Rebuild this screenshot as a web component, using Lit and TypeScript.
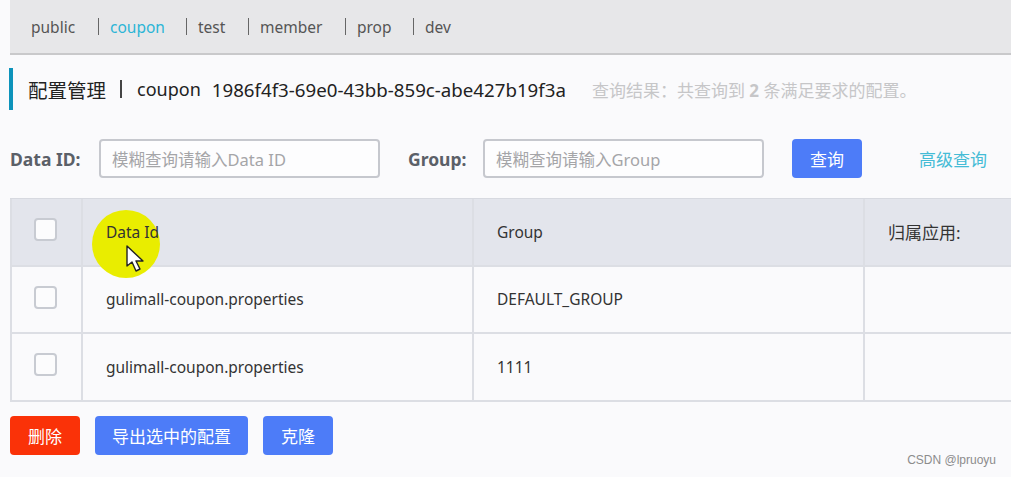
import { LitElement, html, css } from 'lit';
import { customElement } from 'lit/decorators.js';

const TABS = ['public', 'coupon', 'test', 'member', 'prop', 'dev'];
const ROWS = [
  ['gulimall-coupon.properties', 'DEFAULT_GROUP'],
  ['gulimall-coupon.properties', '1111'],
];

@customElement('app-root')
export class AppRoot extends LitElement {
  static styles = css`
    :host {
      display: block;
      position: relative;
      width: 1011px;
      height: 477px;
      overflow: hidden;
      box-sizing: border-box;
      padding-left: 10px;
      background: #fafafc;
      color: #333;
      font-family: 'Noto Sans', 'Noto Sans CJK SC', sans-serif;
    }

    .tabs {
      display: flex;
      align-items: center;
      height: 53px;
      padding: 0 0 0 21px;
      background: #e7e7e9;
      border-bottom: 2px solid #c9c9cb;
      font-size: 15.5px;
      color: #555;
      box-sizing: content-box;
    }
    .tab {
      display: flex;
      align-items: center;
    }
    .tab + .tab::before {
      content: '';
      width: 1px;
      height: 17px;
      margin-right: 11px;
      background: #666;
    }
    .tab.active {
      color: #2cb5d6;
    }
    .tab:nth-child(1) { width: 67px; }
    .tab:nth-child(2) { width: 88px; }
    .tab:nth-child(3) { width: 62px; }
    .tab:nth-child(4) { width: 97px; }
    .tab:nth-child(5) { width: 68px; }

    .title {
      display: flex;
      align-items: center;
      height: 42px;
      margin-top: 13px;
      border-left: 4px solid #0d93bb;
      margin-left: -1px;
      padding-left: 15px;
      font-size: 18px;
      color: #222;
      white-space: nowrap;
    }
    .title-main {
      font-size: 19.5px;
    }
    .sep {
      width: 2px;
      height: 18px;
      margin: 0 15px 0 14px;
      background: #444;
    }
    .ns-id {
      margin-left: 11px;
      font-size: 18.7px;
    }
    .result {
      margin-left: 26px;
      font-size: 17px;
      color: #c6c6c8;
    }

    .search {
      display: flex;
      align-items: center;
      height: 39px;
      margin-top: 29px;
      white-space: nowrap;
    }
    label {
      font-size: 17.5px;
      font-weight: 700;
      color: #5b6068;
    }
    .input {
      display: flex;
      align-items: center;
      box-sizing: border-box;
      width: 281px;
      height: 39px;
      padding-left: 11px;
      border: 2px solid #c6c8ce;
      border-radius: 4px;
      background: #fdfdfe;
      font-size: 16.5px;
      color: #a5a5a8;
    }
    .data-label { width: 89px; }
    .group-label {
      width: 75px;
      margin-left: 28px;
    }
    .query {
      width: 70px;
      margin-left: 28px;
    }
    .advanced {
      margin-left: 57px;
      font-size: 17px;
      color: #45bcd6;
    }

    button {
      height: 39px;
      padding: 0;
      border: 0;
      border-radius: 4px;
      background: #4d7cf8;
      color: #fff;
      font: inherit;
      font-size: 17px;
    }
    button.danger {
      background: #fa3208;
    }

    .table {
      display: grid;
      grid-template-columns: 73px 391px 391px 200px;
      grid-auto-rows: 67.5px;
      width: 1055px;
      margin-top: 20px;
      border-top: 1px solid #d7d9e0;
      box-sizing: border-box;
      font-size: 15.5px;
      color: #333;
    }
    .cell {
      display: flex;
      align-items: center;
      box-sizing: border-box;
      padding-left: 23px;
      border-right: 2px solid #dcdee4;
      border-bottom: 2px solid #dcdee4;
    }
    .cell:nth-child(4n + 1) {
      justify-content: center;
      padding: 0 3px 4px 0;
      border-left: 2px solid #dcdee4;
    }
    .cell.head {
      background: #e3e5ec;
    }
    .cjk {
      font-size: 17px;
    }
    .box {
      box-sizing: border-box;
      width: 23px;
      height: 23px;
      border: 2px solid #c8cbd2;
      border-radius: 4px;
      background: #fcfcfd;
    }

    .actions {
      display: flex;
      gap: 15px;
      margin-top: 14px;
    }
    .actions button:nth-child(1),
    .actions button:nth-child(3) { width: 70px; }
    .actions button:nth-child(2) { width: 153px; }

    .highlight {
      position: absolute;
      left: 92px;
      top: 210px;
      width: 68px;
      height: 68px;
      border-radius: 50%;
      background: #e9ed00;
    }
    .head-text {
      position: relative;
      z-index: 1;
    }
    .cursor {
      position: absolute;
      z-index: 2;
      left: 125px;
      top: 244px;
    }
    .mark {
      position: absolute;
      right: 15px;
      bottom: 10px;
      font-family: 'Liberation Sans', sans-serif;
      font-size: 12px;
      color: #8c8c8c;
    }
  `;

  render() {
    return html`
      <div class="tabs">
        ${TABS.map(
          (t) => html`<div class="tab ${t === 'coupon' ? 'active' : ''}">${t}</div>`
        )}
      </div>
      <div class="title">
        <span class="title-main">配置管理</span><span class="sep"></span>coupon
        <span class="ns-id">1986f4f3-69e0-43bb-859c-abe427b19f3a</span>
        <span class="result">查询结果：共查询到 <b>2</b> 条满足要求的配置。</span>
      </div>
      <div class="search">
        <label class="data-label">Data ID:</label>
        <div class="input">模糊查询请输入Data ID</div>
        <label class="group-label">Group:</label>
        <div class="input">模糊查询请输入Group</div>
        <button class="query">查询</button>
        <span class="advanced">高级查询</span>
      </div>
      <div class="table">
        <div class="cell head"><div class="box"></div></div>
        <div class="cell head"><span class="head-text">Data Id</span></div>
        <div class="cell head">Group</div>
        <div class="cell head"><span class="cjk">归属应用:</span></div>
        ${ROWS.map(
          ([id, group]) => html`
            <div class="cell"><div class="box"></div></div>
            <div class="cell">${id}</div>
            <div class="cell">${group}</div>
            <div class="cell"></div>
          `
        )}
      </div>
      <div class="actions">
        <button class="danger">删除</button>
        <button>导出选中的配置</button>
        <button>克隆</button>
      </div>
      <div class="highlight"></div>
      <svg class="cursor" width="22" height="30" viewBox="0 0 22 30">
        <path
          d="M2 2 L2 22 L7 18 L11 27 L15 25 L11 17 L18 17 Z"
          fill="#fff"
          stroke="#222"
          stroke-width="1.4"
          stroke-linejoin="round"
        />
      </svg>
      <div class="mark">CSDN @lpruoyu</div>
    `;
  }
}
